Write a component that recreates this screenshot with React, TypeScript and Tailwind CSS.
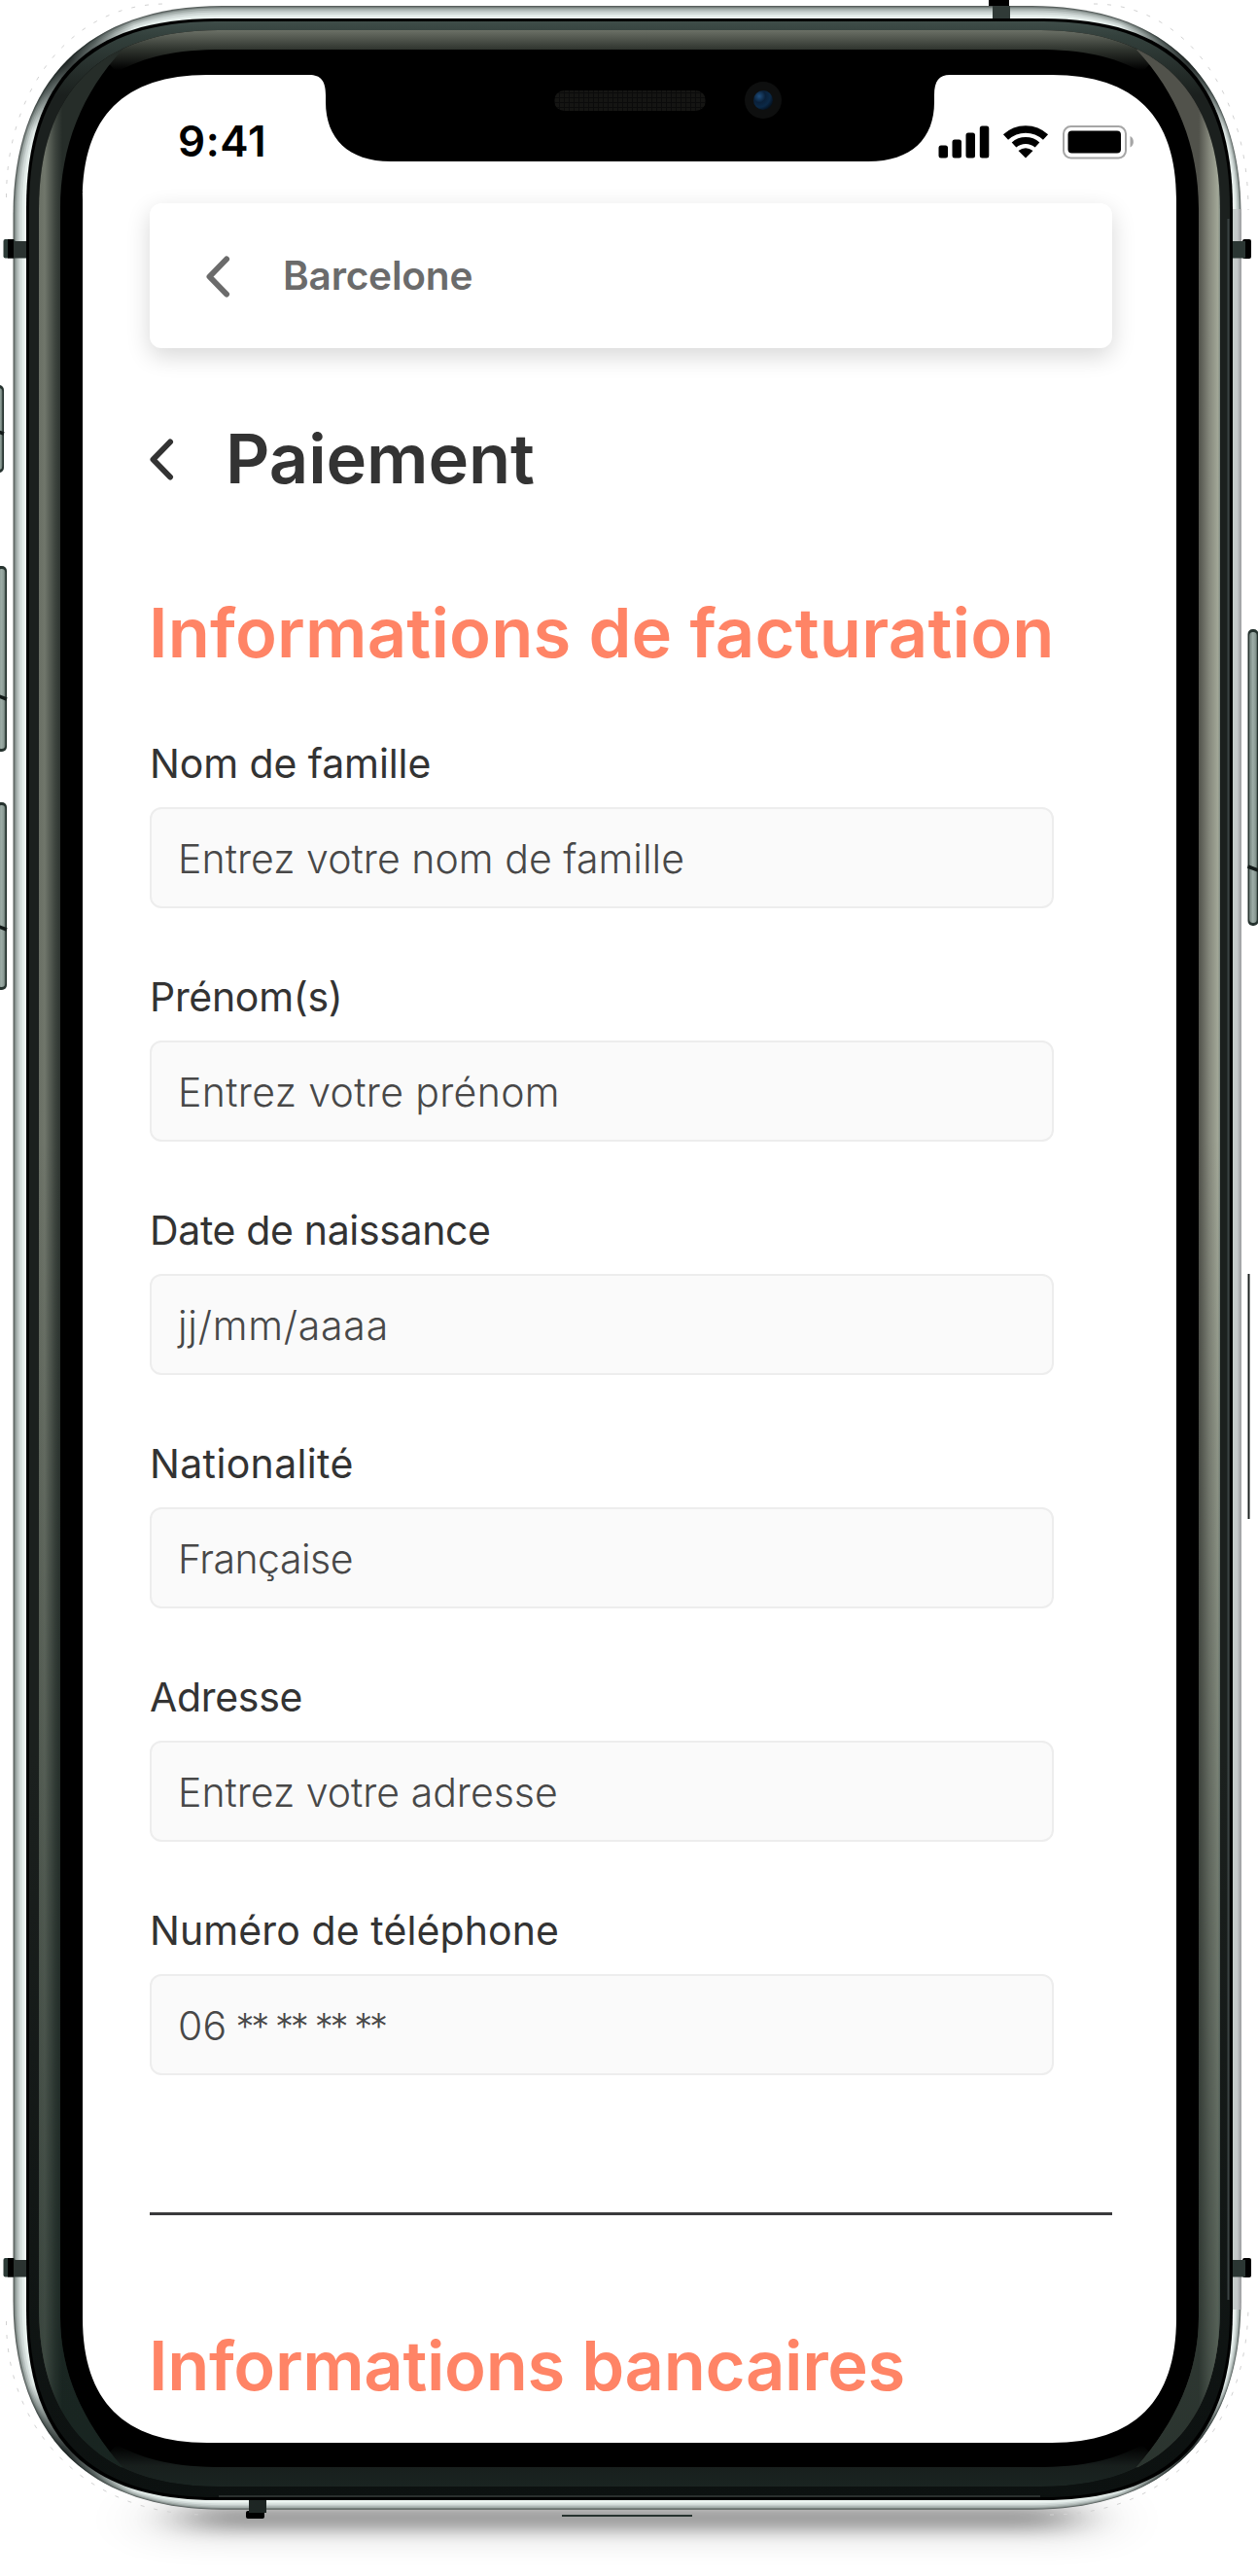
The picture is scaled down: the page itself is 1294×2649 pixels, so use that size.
import type { ReactNode } from "react";

type Box = [number, number, number, number];

/* Smooth-cornered rectangle: s is where the curve starts, h the handle offset from the corner. */
function rr([l, t, r, b]: Box, s: number, h: number) {
  return `M${l} ${t + s}C${l} ${t + h} ${l + h} ${t} ${l + s} ${t}H${r - s}C${r - h} ${t} ${r} ${t + h} ${r} ${t + s}V${b - s}C${r} ${b - h} ${r - h} ${b} ${r - s} ${b}H${l + s}C${l + h} ${b} ${l} ${b - h} ${l} ${b - s}Z`;
}

const OUTER = rr([13.5, 6, 1276.5, 2580.7], 215, 77);
const SIDE = "M40 20L126 51C85 95 62 150 62 215V2382C62 2440 85 2490 126 2537L40 2570Z";
const SIDE_RIGHT = "M1233 215C1233 150 1210 95 1169 51L1260 20V2570L1169 2537C1210 2490 1233 2440 1233 2382Z";
const SCREEN =
  "M85 205C85 119.7 127.7 77 213 77H318C330 77 335 83 335 98V105C335 142 358 166 402 166H893C938 166 961 142 961 105V98C961 83 966 77 977 77H1082C1167.3 77 1210 119.7 1210 205V2384C1210 2469.3 1167.3 2512 1082 2512H213C127.7 2512 85 2469.3 85 2384Z";
const RIM: [number, string][] = [
  [1.2, "#7f8886"],
  [2.6, "#a3adaa"],
  [4.5, "#bcc5c3"],
  [6.5, "#d2dbd9"],
  [9, "#e4edea"],
  [11.5, "#eff7f4"],
];
const CORNERS = [
  [66, 62],
  [1224, 62],
  [66, 2525],
  [1224, 2525],
];

function SideButton({ x, y, h, split }: { x: number; y: number; h: number; split: number }) {
  return (
    <g>
      <rect x={x} y={y} width="11" height={h} rx="5" fill="#26332f" />
      <rect x={x + 1.5} y={y + 3} width="8" height={h - 6} rx="4" fill="url(#btn)" />
      <path d={`M${x} ${split}L${x + 11} ${split + 4}`} stroke="#121a18" strokeWidth="3.5" />
    </g>
  );
}

function DeviceFrame() {
  return (
    <svg className="absolute inset-0" width="1294" height="2649" viewBox="0 0 1294 2649" fill="none">
      <defs>
        <linearGradient id="left" gradientUnits="userSpaceOnUse" x1="40" x2="64" y1="0" y2="0">
          <stop offset="0" stopColor="#6a7065" />
          <stop offset=".25" stopColor="#70766b" />
          <stop offset=".7" stopColor="#3d443e" />
          <stop offset="1" stopColor="#262d29" />
        </linearGradient>
        <linearGradient id="right" gradientUnits="userSpaceOnUse" x1="1233" x2="1255" y1="0" y2="0">
          <stop offset="0" stopColor="#51524b" />
          <stop offset=".5" stopColor="#85887c" />
          <stop offset=".9" stopColor="#a3a898" />
          <stop offset="1" stopColor="#7c8880" />
        </linearGradient>
        <linearGradient id="top" gradientUnits="userSpaceOnUse" x1="0" x2="0" y1="31" y2="72">
          <stop offset="0" stopColor="#6b7066" />
          <stop offset=".48" stopColor="#30352f" />
          <stop offset="1" stopColor="#000" />
        </linearGradient>
        <linearGradient id="bottom" gradientUnits="userSpaceOnUse" x1="0" x2="0" y1="2515" y2="2557">
          <stop offset="0" stopColor="#000" />
          <stop offset=".5" stopColor="#181f1d" />
          <stop offset="1" stopColor="#1a2421" />
        </linearGradient>
        <linearGradient id="band" gradientUnits="userSpaceOnUse" x1="0" x2="0" y1="22" y2="2568">
          <stop offset="0" stopColor="#3f4d49" />
          <stop offset=".006" stopColor="#33403c" />
          <stop offset=".03" stopColor="#1b201e" />
          <stop offset=".7" stopColor="#1b201e" />
          <stop offset="1" stopColor="#0c1110" />
        </linearGradient>
        <linearGradient id="dim" x1="0" x2="0" y1="0" y2="1">
          <stop offset=".45" stopColor="#0f1f1b" stopOpacity="0" />
          <stop offset="1" stopColor="#0f1f1b" stopOpacity=".6" />
        </linearGradient>
        <linearGradient id="rimRight" x1="0" x2="1" y1="0" y2="0">
          <stop offset="0" stopColor="#c6cecb" />
          <stop offset=".6" stopColor="#c4c7c8" />
          <stop offset="1" stopColor="#9c9c9f" />
        </linearGradient>
        <linearGradient id="btn" x1="0" x2="1" y1="0" y2="0">
          <stop offset="0" stopColor="#6e7d78" />
          <stop offset=".45" stopColor="#9dada7" />
          <stop offset=".8" stopColor="#899993" />
          <stop offset="1" stopColor="#55645f" />
        </linearGradient>
        <radialGradient id="smudge">
          <stop offset="0" stopColor="#0c1211" stopOpacity=".85" />
          <stop offset=".45" stopColor="#1a2422" stopOpacity=".6" />
          <stop offset="1" stopColor="#26332f" stopOpacity="0" />
        </radialGradient>
        <radialGradient id="lens" cx=".3" cy=".3" r=".8">
          <stop offset="0" stopColor="#1f4e7c" />
          <stop offset=".4" stopColor="#0a2039" />
          <stop offset=".7" stopColor="#0b2947" />
          <stop offset="1" stopColor="#030c17" />
        </radialGradient>
        <pattern id="mesh" width="5" height="5" patternUnits="userSpaceOnUse">
          <rect width="5" height="5" fill="#151513" />
          <path d="M0 .5H5M.5 0V5" stroke="#0b0b0b" />
        </pattern>
        <clipPath id="outerClip">
          <path d={OUTER} />
        </clipPath>
        <clipPath id="bandClip">
          <path d={rr([40, 31, 1255, 2557], 185, 63)} />
        </clipPath>
        <filter id="soft" x="-20%" y="-200%" width="140%" height="500%">
          <feGaussianBlur stdDeviation="28 8" />
        </filter>
        <filter id="softer" x="-20%" y="-200%" width="140%" height="500%">
          <feGaussianBlur stdDeviation="36 16" />
        </filter>
      </defs>

      {/* ground shadow */}
      <rect x="160" y="2572" width="970" height="38" fill="#000" opacity=".13" filter="url(#softer)" />
      <rect x="195" y="2577" width="905" height="24" fill="#000" opacity=".32" filter="url(#soft)" />

      {/* faint outline round the corners */}
      <path
        d="M6.5 203C6.5 90 75 4 170 4M1125 4C1215 4 1284 90 1284 216M6.5 2387C6.5 2500 90 2586 212 2586M1080 2586C1200 2586 1284 2500 1284 2368"
        stroke="#d2d2d2"
        strokeDasharray="4 10"
      />

      {/* buttons */}
      <SideButton x={-7} y={396} h={90} split={442} />
      <SideButton x={-4} y={582} h={191} split={715} />
      <SideButton x={-4} y={825} h={193} split={952} />
      <SideButton x={1283.5} y={647} h={305} split={891} />
      <path d="M1284.5 1310V1562" stroke="#1a201f" strokeWidth="2" />
      <path d="M578 2587H712" stroke="#27332f" strokeWidth="2.2" />

      {/* polished rim */}
      <path d={OUTER} fill="#59605e" />
      {RIM.map(([i, c]) => (
        <path key={i} d={rr([13.5 + i, 6 + i, 1276.5 - i * 0.6, 2580.7 - i * 0.7], 215 - i, 77 - i * 0.8)} fill={c} />
      ))}
      <rect x="1267" y="215" width="9.5" height="2160" fill="url(#rimRight)" />
      <g clipPath="url(#outerClip)">
        {CORNERS.map(([x, y]) => (
          <circle key={`${x}-${y}`} cx={x} cy={y} r="80" fill="url(#smudge)" />
        ))}
      </g>

      {/* antenna lines */}
      {[246, 2322].map((y) => (
        <g key={y}>
          <rect x="3.5" y={y} width="12" height="19.5" rx="2" fill="#2c3b37" />
          <rect x="8" y={y} width="6" height="19.5" fill="#000" />
          <rect x="14" y={y + 2} width="13" height="17.5" fill="#2b3331" />
          <rect x="1278" y={y} width="9" height="20" rx="2" fill="#000" />
          <rect x="1268" y={y + 2} width="13" height="17.5" fill="#2b3633" />
        </g>
      ))}
      <rect x="1017" y="-3" width="21" height="9" fill="#000" />
      <rect x="1021" y="6" width="18" height="14" fill="#303a37" />
      <rect x="253" y="2582" width="19" height="8" rx="2" fill="#000" />
      <rect x="256" y="2568" width="18" height="16" fill="#1e2624" />

      {/* bezel layers */}
      <path d={rr([27, 19, 1268, 2571], 195, 63)} fill="#000" />
      <path d={rr([30, 22, 1265, 2568], 192, 63)} fill="url(#band)" />
      <path d={rr([40, 31, 1255, 2557], 185, 63)} fill="#000" />
      <path d="M1263.5 225V2365" stroke="#3a4242" strokeWidth="2" />
      <path d="M225 2567H1070" stroke="#343b39" strokeWidth="1.5" />
      <g clipPath="url(#bandClip)">
        <path d="M80 31H1215L1175 74C1145 58 1115 51 1065 51H230C180 51 150 58 120 74Z" fill="url(#top)" />
        <path d="M80 2557H1215L1175 2514C1145 2530 1115 2537 1065 2537H230C180 2537 150 2530 120 2514Z" fill="url(#bottom)" />
        <path d={SIDE} fill="url(#left)" />
        <path d={SIDE} fill="url(#dim)" />
        <path d={SIDE_RIGHT} fill="url(#right)" />
        <path d={SIDE_RIGHT} fill="url(#dim)" />
      </g>

      {/* display cut-out, speaker and camera */}
      <path d={SCREEN} fill="#fff" />
      <rect x="570" y="93" width="156" height="21" rx="10.5" fill="url(#mesh)" />
      <circle cx="785" cy="103" r="19" fill="#0e0f0f" />
      <circle cx="785" cy="103" r="10" fill="url(#lens)" />
    </svg>
  );
}

function StatusIcons() {
  return (
    <svg width="204" height="38" viewBox="964 126 204 38" fill="none">
      <rect x="965.5" y="149.5" width="9.5" height="13" rx="2.5" fill="#000" />
      <rect x="979.5" y="143.5" width="9.5" height="19" rx="2.5" fill="#000" />
      <rect x="993.5" y="136.5" width="9.5" height="26" rx="2.5" fill="#000" />
      <rect x="1007.8" y="129.5" width="9.5" height="33" rx="2.5" fill="#000" />
      <path d="M1034.5 141A30 30 0 0 1 1075.5 141" stroke="#000" strokeWidth="7.5" />
      <path d="M1043 149A18 18 0 0 1 1067 149" stroke="#000" strokeWidth="7" />
      <path d="M1055 162.5L1047.5 155Q1055 149.5 1062.5 155Z" fill="#000" />
      <rect x="1094" y="130" width="64" height="32.5" rx="7.5" stroke="#a6a6a6" strokeWidth="2" />
      <rect x="1098.5" y="134.5" width="54.5" height="23" rx="4" fill="#000" />
      <path d="M1162.5 140C1167 142 1167 149.5 1162.5 151.5Z" fill="#a6a6a6" />
    </svg>
  );
}

function Chevron() {
  return (
    <svg width="26" height="43" viewBox="0 0 26 43" fill="none">
      <path d="M21 3.5L3.5 21.5L21 39.5" stroke="currentColor" strokeWidth="6" strokeLinecap="round" strokeLinejoin="round" />
    </svg>
  );
}

type Field = { label: string; labelClass: string; value: ReactNode; valueClass: string };

const FIELDS: Field[] = [
  { label: "Nom de famille", labelClass: "tracking-[-0.1px]", value: "Entrez votre nom de famille", valueClass: "tracking-[0.05px]" },
  { label: "Prénom(s)", labelClass: "tracking-[-0.3px]", value: "Entrez votre prénom", valueClass: "tracking-[0.35px]" },
  { label: "Date de naissance", labelClass: "tracking-[-0.35px]", value: "jj/mm/aaaa", valueClass: "tracking-[0.75px]" },
  { label: "Nationalité", labelClass: "tracking-[0.35px]", value: "Française", valueClass: "tracking-[-0.5px]" },
  { label: "Adresse", labelClass: "tracking-[-0.3px]", value: "Entrez votre adresse", valueClass: "tracking-normal" },
  {
    label: "Numéro de téléphone",
    labelClass: "tracking-[0.1px]",
    value: (
      <>
        06<span className="text-[38px] tracking-[-3.2px] [word-spacing:1.5px]"> ** ** ** **</span>
      </>
    ),
    valueClass: "tracking-[0.2px]",
  },
];

export default function App() {
  return (
    <div className="relative h-[2649px] w-[1294px] overflow-hidden bg-white font-['Inter',sans-serif] text-[#333]">
      <DeviceFrame />
      <div className="relative flex flex-col pr-[150px] pl-[154px] pt-[120px]">
        <header className="-mr-[24px] flex h-[50px] items-center justify-between pl-[29px]">
          <span className="text-[44px] leading-[50px] font-semibold tracking-[0.6px] text-black">9:41</span>
          <StatusIcons />
        </header>

        <nav className="mt-[39px] flex h-[149px] items-center rounded-xl bg-white pt-[2px] pl-[58px] text-[#6b6b6b] shadow-[0_8px_24px_rgba(0,0,0,0.16)]">
          <Chevron />
          <span className="ml-[53px] text-[40.6px] font-semibold tracking-[-0.2px]">Barcelone</span>
        </nav>

        <div className="mt-[74px] flex h-20 items-center">
          <Chevron />
          <h1 className="ml-[52px] text-[70.5px] leading-[80px] font-semibold tracking-[-0.1px]">Paiement</h1>
        </div>

        <h2 className="-ml-px mt-[99px] text-[70.5px] leading-[80px] font-semibold tracking-[0.2px] whitespace-nowrap text-[#ff8466]">
          Informations de facturation
        </h2>

        <form className="mt-[69px] flex flex-col gap-[66px]">
          {FIELDS.map((f) => (
            <label key={f.label} className="flex w-[930px] flex-col gap-5">
              <span className={`text-[41px] leading-[50px] ${f.labelClass}`}>{f.label}</span>
              <span
                className={`flex h-[104px] items-center rounded-xl border-[2.5px] border-[#ededed] bg-[#fafafa] pt-[4px] pl-[27px] text-[41px] font-light text-[#484848] ${f.valueClass}`}
              >
                <span className="whitespace-pre">{f.value}</span>
              </span>
            </label>
          ))}
        </form>

        <hr className="mt-[141px] h-[3px] border-0 bg-[#3a3a3c]" />

        <h2 className="-ml-px mt-[115px] text-[70.5px] leading-[80px] font-semibold tracking-[-0.35px] whitespace-nowrap text-[#ff8466]">
          Informations bancaires
        </h2>
      </div>
    </div>
  );
}
